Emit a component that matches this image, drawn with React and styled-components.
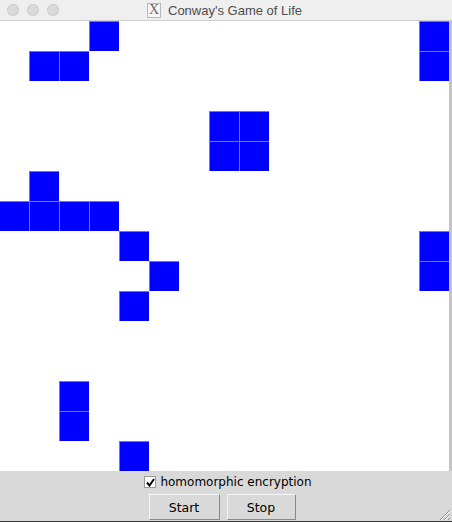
import styled, { createGlobalStyle } from 'styled-components';

const GlobalStyle = createGlobalStyle`
  html, body {
    margin: 0;
    padding: 0;
    background: #ffffff;
  }
`;

const Window = styled.div`
  width: 452px;
  height: 522px;
  display: flex;
  flex-direction: column;
  overflow: hidden;
`;

const TitleBar = styled.div`
  height: 20px;
  border-bottom: 1px solid #cfcfcf;
  background: #efefef;
  display: flex;
  align-items: center;
  position: relative;
`;

const Lights = styled.div`
  display: flex;
  gap: 8px;
  padding-left: 7px;
`;

const Light = styled.span`
  width: 12px;
  height: 12px;
  border-radius: 50%;
  background: #dadada;
  box-shadow: inset 0 0 0 1px #cdcdcd;
`;

const Title = styled.div`
  position: absolute;
  left: 147px;
  top: 0;
  height: 20px;
  display: flex;
  align-items: center;
  gap: 7px;
  font-family: 'Liberation Sans', Arial, sans-serif;
  font-size: 13px;
  color: #4d4d4d;
`;

const XIcon = styled.span`
  width: 12px;
  height: 13px;
  border: 1px solid #b8b8b8;
  background: #f6f6f6;
  display: flex;
  align-items: center;
  justify-content: center;
  font-family: 'Liberation Serif', serif;
  font-size: 14px;
  line-height: 1;
  color: #6a6a6a;
`;

const BoardRow = styled.div`
  display: flex;
  height: 450px;
`;

const Board = styled.div`
  width: 449px;
  height: 450px;
  background: #ffffff;
  overflow: hidden;
`;

const Frame = styled.div`
  width: 3px;
  background: #c4c4c4;
`;

const Grid = styled.div`
  margin-left: -1px;
  display: grid;
  grid-template-columns: repeat(15, 30px);
  grid-template-rows: repeat(15, 30px);
`;

const Cell = styled.div`
  box-sizing: border-box;
  background: ${({ $alive }) => ($alive ? '#0000ff' : 'transparent')};
  border-top: 1px solid ${({ $alive }) => ($alive ? '#808080' : 'transparent')};
  border-left: 1px solid ${({ $alive }) => ($alive ? '#808080' : 'transparent')};
`;

const Controls = styled.div`
  flex: 1;
  background: #d9d9d9;
  border-bottom: 1px solid #3a3a3a;
  display: flex;
  flex-direction: column;
  align-items: center;
  position: relative;
  font-family: 'DejaVu Sans', sans-serif;
  font-size: 12px;
  color: #000;
`;

const CheckRow = styled.label`
  display: flex;
  align-items: center;
  gap: 4px;
  height: 20px;
  margin-top: 1px;
  margin-left: 4px;
`;

const Box = styled.span`
  width: 10px;
  height: 10px;
  background: #ffffff;
  border: 1px solid #9a9a9a;
  display: flex;
  align-items: center;
  justify-content: center;
`;

const Buttons = styled.div`
  display: flex;
  gap: 7px;
  margin-top: 2px;
  margin-left: -8px;
`;

const Button = styled.button`
  box-sizing: border-box;
  width: ${({ $w }) => $w}px;
  height: 26px;
  padding: 0;
  background: #d9d9d9;
  border: 1px solid;
  border-color: #f4f4f4 #8a8a8a #8a8a8a #f4f4f4;
  font-family: 'DejaVu Sans', sans-serif;
  font-size: 12.5px;
  color: #000;
`;

const Grip = styled.svg`
  position: absolute;
  right: 1px;
  bottom: 0;
`;

const alive = [
  [0, 3], [0, 14],
  [1, 1], [1, 2], [1, 14],
  [3, 7], [3, 8],
  [4, 7], [4, 8],
  [5, 1],
  [6, 0], [6, 1], [6, 2], [6, 3],
  [7, 4], [7, 14],
  [8, 5], [8, 14],
  [9, 4],
  [12, 2],
  [13, 2],
  [14, 4],
];

const isAlive = (r, c) => alive.some(([ar, ac]) => ar === r && ac === c);

const App = () => {
  const cells = [];
  for (let r = 0; r < 15; r++) {
    for (let c = 0; c < 15; c++) {
      cells.push(<Cell key={`${r}-${c}`} $alive={isAlive(r, c)} />);
    }
  }

  return (
    <>
      <GlobalStyle />
      <Window>
        <TitleBar>
          <Lights>
            <Light />
            <Light />
            <Light />
          </Lights>
          <Title>
            <XIcon>X</XIcon>
            Conway's Game of Life
          </Title>
        </TitleBar>
        <BoardRow>
          <Board>
            <Grid>{cells}</Grid>
          </Board>
          <Frame />
        </BoardRow>
        <Controls>
          <CheckRow>
            <Box>
              <svg width="9" height="9" viewBox="0 0 9 9">
                <path d="M1 4.5 L3.5 7.5 L8 1" fill="none" stroke="#000" strokeWidth="2" />
              </svg>
            </Box>
            homomorphic encryption
          </CheckRow>
          <Buttons>
            <Button $w={71}>Start</Button>
            <Button $w={69}>Stop</Button>
          </Buttons>
          <Grip width="14" height="14" viewBox="0 0 14 14">
            <path d="M13 3 L3 13 M13 7 L7 13 M13 11 L11 13" stroke="#8c8c8c" strokeWidth="1" />
            <path d="M13 4 L4 13 M13 8 L8 13" stroke="#ffffff" strokeWidth="1" />
          </Grip>
        </Controls>
      </Window>
    </>
  );
};

export default App;
